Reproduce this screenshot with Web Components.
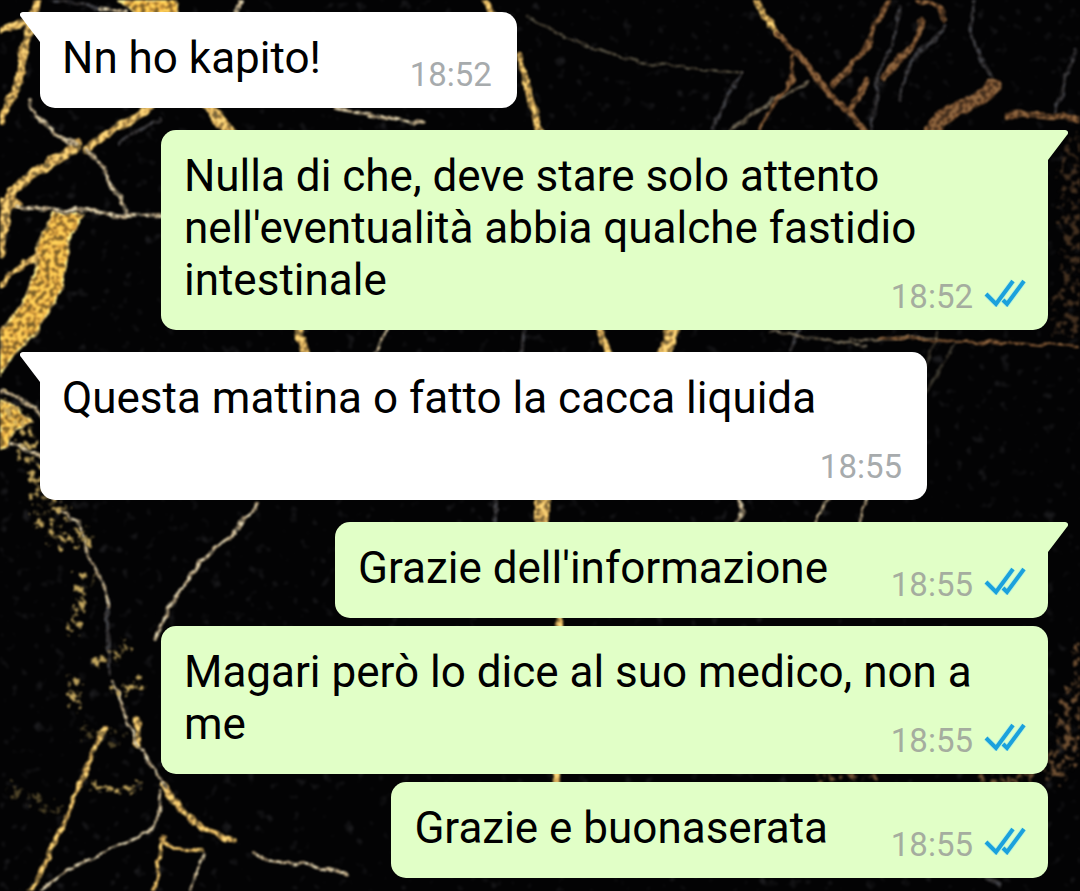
<!DOCTYPE html>
<html lang="it">
<head>
<meta charset="utf-8">
<meta name="viewport" content="width=device-width, initial-scale=1">
<title>Chat</title>
<style>
  body {
    margin: 0;
    background: #030304;
    font-family: Roboto, "Liberation Sans", sans-serif;
  }
</style>
</head>
<body>
<chat-screen>
  <chat-message direction="in" time="18:52" tail>Nn ho kapito!</chat-message>
  <chat-message direction="out" time="18:52" tail>Nulla di che, deve stare solo attento nell'eventualità abbia qualche fastidio intestinale</chat-message>
  <chat-message direction="in" time="18:55" tail>Questa mattina o fatto la cacca liquida</chat-message>
  <chat-message direction="out" time="18:55" tail>Grazie dell'informazione</chat-message>
  <chat-message direction="out" time="18:55">Magari però lo dice al suo medico, non a me</chat-message>
  <chat-message direction="out" time="18:55">Grazie e buonaserata</chat-message>
</chat-screen>

<template id="wallpaper-template">
  <style>
    :host { display: block; overflow: hidden; }
    svg { display: block; width: 100%; height: 100%; }
    path { fill: none; stroke-linecap: round; stroke-linejoin: round; }
    .gold path { stroke: #c4a75f; }
    .gold .solid { fill: #cba144; stroke: #d9c27c; stroke-width: 2; }
    .pale path { stroke: #a9a189; }
    .amber path { stroke: #6e4f32; }
    .grey path { stroke: #303136; }
  </style>
  <svg viewBox="0 0 1080 891" preserveAspectRatio="xMidYMid slice" aria-hidden="true">
    <defs>
      <filter id="glitter" filterUnits="userSpaceOnUse" x="0" y="0" width="1080" height="891" color-interpolation-filters="sRGB">
        <feTurbulence type="fractalNoise" baseFrequency="0.07" numOctaves="2" seed="4" result="warp"/>
        <feDisplacementMap in="SourceGraphic" in2="warp" scale="8" xChannelSelector="R" yChannelSelector="G" result="rough"/>
        <feTurbulence type="fractalNoise" baseFrequency="0.22" numOctaves="2" seed="9"/>
        <feColorMatrix values="5 0 0 0 -1.8  5 0 0 0 -1.9  5 0 0 0 -2  0 0 0 0 1" result="grain"/>
        <feComposite in="rough" in2="grain" operator="arithmetic" k1="0.7" k2="0.6" k3="0" k4="0" result="lit"/>
        <feComposite in="lit" in2="rough" operator="in"/>
        <feGaussianBlur stdDeviation="0.9"/>
      </filter>
      <filter id="broken" filterUnits="userSpaceOnUse" x="0" y="0" width="1080" height="891" color-interpolation-filters="sRGB">
        <feTurbulence type="fractalNoise" baseFrequency="0.12" numOctaves="3" seed="2" result="warp"/>
        <feDisplacementMap in="SourceGraphic" in2="warp" scale="24" xChannelSelector="R" yChannelSelector="G" result="rough"/>
        <feTurbulence type="fractalNoise" baseFrequency="0.14" numOctaves="3" seed="7"/>
        <feColorMatrix values="0 0 0 0 1  0 0 0 0 1  0 0 0 0 1  7 0 0 0 -3.5" result="holes"/>
        <feComposite in="rough" in2="holes" operator="in"/>
        <feGaussianBlur stdDeviation="0.9"/>
      </filter>
      <filter id="dust" x="0" y="0" width="100%" height="100%" color-interpolation-filters="sRGB">
        <feTurbulence type="fractalNoise" baseFrequency="0.09" numOctaves="2" seed="21"/>
        <feColorMatrix values="0 0 0 0 0.3  0 0 0 0 0.3  0 0 0 0 0.32  4 0 0 0 -2.5"/>
        <feGaussianBlur stdDeviation="1"/>
      </filter>
    </defs>
    <rect width="1080" height="891" fill="#030304"/>
    <rect width="1080" height="891" filter="url(#dust)" opacity="0.35"/>

    <g class="grey" filter="url(#glitter)" stroke-width="4">
      <path d="M975 0L970 30L980 55L992 78"/>
      <path d="M1076 50L1066 78L1055 112"/>
      <path d="M742 73L728 95L712 130"/>
      <path d="M900 8L892 45L878 75L872 130"/>
      <path d="M945 28L910 62L900 100"/>
      <path d="M55 0L100 8M120 142L160 118"/>
      <path d="M525 330L520 352M495 500V522"/>
      <path d="M108 600V672"/>
      <path d="M800 330L790 352"/>
      <path d="M1000 885L980 876"/>
    </g>

    <g class="gold" filter="url(#glitter)">
      <path class="solid" d="M118 0L176 0L178 16L140 16Z"/>
      <path class="solid" d="M54 212L84 214L69 242L60 292L34 335L10 358L0 378L0 330L22 305L36 268L35 248Z"/>
      <path class="solid" d="M0 400L18 408L30 424L14 430L8 446L0 448Z"/>
      <path d="M37 0L31 22L24 50L19 82L0 120" stroke-width="9"/>
      <path d="M0 32L14 26L26 20" stroke-width="7"/>
      <path d="M152 106L130 122L108 132L86 150" stroke-width="8"/>
      <path d="M76 145L60 158L38 170L14 190L6 208L4 230L0 252" stroke-width="10"/>
      <path d="M0 202L20 204" stroke-width="9"/>
      <path d="M0 286L16 270L36 256" stroke-width="6"/>
      <path d="M206 104L232 134" stroke-width="13"/>
      <path d="M484 0L494 16M520 56L528 92L540 132" stroke-width="7"/>
      <path d="M298 326L306 356" stroke-width="9"/>
      <path d="M598 326L608 356" stroke-width="8"/>
      <path d="M674 326L664 356" stroke-width="14"/>
      <path d="M542 496V526" stroke-width="14"/>
      <path d="M558 614V630M556 772V784" stroke-width="6"/>
      <path d="M104 727L84 775L64 822L48 858L29 895" stroke-width="5"/>
      <path d="M756 0L768 20L778 36" stroke-width="6"/>
      <path d="M136 718L138 745" stroke-width="7"/>
      <path d="M164 785L172 800L186 814L202 828L234 841" stroke-width="6"/>
      <path d="M163 836L158 870L154 895M160 840L175 850L203 850" stroke-width="4"/>
    </g>

    <g class="pale" filter="url(#glitter)" stroke-width="4">
      <path d="M241 0L236 14" stroke-width="5"/>
      <path d="M30 100L42 122L56 134L75 145"/>
      <path d="M86 150L102 166L110 184L120 196L126 214"/>
      <path d="M16 206L42 210L80 210L124 216L162 215"/>
      <path d="M335 108L380 117L422 124"/>
      <path d="M100 8L126 12"/>
      <path d="M526 15L560 34L600 50L640 62L700 69L742 73" stroke-width="3" opacity="0.6"/>
      <path d="M390 326L374 356" stroke-width="3"/>
      <path d="M256 505L244 522L226 540L200 562L170 606L155 638"/>
      <path d="M0 391L18 395L34 408L42 420"/>
      <path d="M12 444L42 457" stroke-width="5"/>
      <path d="M60 512L78 520L85 540L90 560L103 580L109 606" stroke-width="3"/>
      <path d="M36 893L72 868L110 850L146 834L158 820L160 790" stroke-width="3"/>
      <path d="M112 680L122 708L136 742L154 768L166 788" stroke-width="3"/>
      <path d="M254 853L272 863L310 864L346 874"/>
      <path d="M205 852L196 872L190 895" stroke-width="3"/>
      <path d="M738 498L744 510L736 524M829 498L816 524M867 498L860 524" stroke-width="3"/>
      <path d="M770 332L830 340L865 346M850 340L935 338" stroke-width="3" opacity="0.7"/>
      <path d="M938 332L924 370M958 340L926 392" stroke-width="3" opacity="0.5"/>
      <path d="M808 84L772 100L730 132" stroke-width="4" opacity="0.7"/>
    </g>

    <g class="amber" filter="url(#glitter)">
      <path d="M776 34L800 56L820 84L846 110L866 132" stroke-width="7"/>
      <path d="M792 56L793 80L772 104L760 130" stroke-width="4"/>
      <path d="M888 4L874 26L868 46L858 58L834 84" stroke-width="6"/>
      <path d="M922 20L914 46L896 62L884 78M866 80L852 108" stroke-width="7"/>
      <path d="M918 0L938 6L945 22" stroke-width="6"/>
      <path d="M930 130L948 114L972 102L994 88" stroke-width="16"/>
      <path d="M1010 115L1034 115L1080 119" stroke-width="7"/>
      <path d="M880 338L950 341L1080 346" stroke-width="3"/>
    </g>

    <g class="amber" filter="url(#broken)">
      <path d="M1090 650L1074 714L1060 768" stroke-width="28"/>
      <path d="M1074 150L1070 200L1076 260L1066 326" stroke-width="26" opacity="0.6"/>
      <path d="M820 780L870 778M980 780L1030 778" stroke-width="12"/>
    </g>
    <g class="gold" filter="url(#broken)">
      <path d="M0 400L20 420L28 450L44 496L60 514" stroke-width="18"/>
      <path d="M40 520L60 540L84 538" stroke-width="16"/>
      <path d="M84 578L80 600L74 630" stroke-width="14"/>
      <path d="M96 662L126 648M118 688L138 684M74 680V710" stroke-width="12"/>
      <path d="M94 786L114 792L144 784" stroke-width="8"/>
      <path d="M84 734L122 738M8 790L60 810" stroke-width="10" opacity="0.4"/>
    </g>
  </svg>
</template>

<template id="screen-template">
  <style>
    :host {
      display: block;
      position: relative;
      min-height: 100vh;
      box-sizing: border-box;
    }
    marble-wallpaper { position: absolute; inset: 0; }
    main {
      position: relative;
      display: flex;
      flex-direction: column;
      gap: 8px;
      padding: 12px 32px 12px 40px;
    }
    /* a new sender starts further down */
    ::slotted([tail]:not(:first-child)) { margin-top: 14px; }
  </style>
  <marble-wallpaper></marble-wallpaper>
  <main><slot></slot></main>
</template>

<template id="message-template">
  <style>
    :host {
      --bubble: #ffffff;
      --meta: #a7abad;
      --reserve: 174px;
      position: relative;
      display: grid;
      box-sizing: border-box;
      max-width: 88%;
      align-self: flex-start;
      padding: 20px 22px 24px;
      border-radius: 15px;
      background: var(--bubble);
      color: #000;
    }
    :host([direction="out"]) {
      --bubble: #e1ffc7;
      --meta: #a5ad9f;
      --reserve: 198px;
      align-self: flex-end;
      padding-left: 23px;
    }
    :host([direction="in"][tail]) { border-top-left-radius: 0; }
    :host([direction="out"][tail]) { border-top-right-radius: 0; }
    p, footer { grid-area: 1 / 1; }
    p {
      margin: 0;
      font-size: 44px;
      line-height: 52px;
    }
    /* keeps the last line clear of the time */
    .reserve {
      display: inline-block;
      width: var(--reserve);
      height: 1px;
    }
    footer {
      display: flex;
      align-items: center;
      gap: 11px;
      align-self: end;
      justify-self: end;
      height: 40px;
      margin-bottom: -11px;
      color: var(--meta);
      font-size: 33px;
      line-height: 40px;
    }
    :host([direction="in"]) footer { padding-right: 3px; }
    .ticks { display: none; margin-bottom: 8px; }
    :host([direction="out"]) .ticks { display: block; }
    .tail {
      display: none;
      position: absolute;
      top: 0;
      right: 100%;
      margin-right: -1px;
      fill: var(--bubble);
    }
    :host([tail]) .tail { display: block; }
    :host([direction="out"]) .tail {
      right: auto;
      left: 100%;
      margin: 0 0 0 -1px;
      transform: scaleX(-1);
    }
  </style>
  <svg class="tail" width="21" height="31" viewBox="0 0 21 31" aria-hidden="true">
    <path d="M21 0H3C0 0 -1 3 1 5L20 30H21Z"/>
  </svg>
  <p><slot></slot><span class="reserve"></span></p>
  <footer>
    <time></time>
    <svg class="ticks" width="42" height="28" viewBox="0 0 42 28" role="img" aria-label="Letto">
      <g fill="none" stroke="#8fe6f5" stroke-width="6" opacity="0.4">
        <path d="M2 15L12 25L29 2"/>
        <path d="M19 21L23 25L40 2"/>
      </g>
      <g fill="none" stroke="#1ba1dc" stroke-width="4">
        <path d="M2 15L12 25L29 2"/>
        <path d="M19 21L23 25L40 2"/>
      </g>
    </svg>
  </footer>
</template>

<script>
  class MarbleWallpaper extends HTMLElement {
    constructor() {
      super();
      this.attachShadow({ mode: 'open' });
      const template = document.getElementById('wallpaper-template');
      this.shadowRoot.appendChild(template.content.cloneNode(true));
    }
  }

  class ChatMessage extends HTMLElement {
    static get observedAttributes() {
      return ['time'];
    }

    constructor() {
      super();
      this.attachShadow({ mode: 'open' });
      const template = document.getElementById('message-template');
      this.shadowRoot.appendChild(template.content.cloneNode(true));
      this.timeElement = this.shadowRoot.querySelector('time');
    }

    attributeChangedCallback(name, oldValue, newValue) {
      this.timeElement.textContent = newValue;
      this.timeElement.dateTime = newValue;
    }
  }

  class ChatScreen extends HTMLElement {
    constructor() {
      super();
      this.attachShadow({ mode: 'open' });
      const template = document.getElementById('screen-template');
      this.shadowRoot.appendChild(template.content.cloneNode(true));
    }
  }

  customElements.define('marble-wallpaper', MarbleWallpaper);
  customElements.define('chat-message', ChatMessage);
  customElements.define('chat-screen', ChatScreen);
</script>
</body>
</html>
